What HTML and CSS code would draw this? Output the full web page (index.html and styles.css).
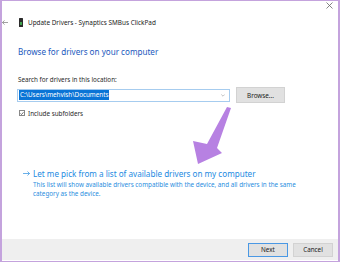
FILE: index.html
```html
<!DOCTYPE html>
<html>
<head>
<meta name="viewport" content="width=device-width, initial-scale=1">
<link rel="stylesheet" href="styles.css">
</head>
<body>
<div class="window">
  <div class="caption">
    <svg class="close" width="7" height="7" viewBox="0 0 7 7"><path d="M0.5 0.5L6.5 6.5M6.5 0.5L0.5 6.5" stroke="#666" stroke-width="0.8" fill="none"/></svg>
  </div>
  <div class="header">
    <svg class="back" width="6" height="5" viewBox="0 0 6 5"><path d="M2.5 0.4L0.5 2.5L2.5 4.6M0.5 2.5H6" stroke="#777" stroke-width="0.7" fill="none"/></svg>
    <svg class="device" width="4" height="9" viewBox="0 0 4 9"><rect x="0" y="0" width="4" height="9" rx="0.5" fill="#2b2b2b"/><rect x="1" y="4" width="2" height="3" fill="#3fa34d"/></svg>
    <span class="title">Update Drivers - Synaptics SMBus ClickPad</span>
  </div>
  <div class="content">
    <h1>Browse for drivers on your computer</h1>
    <div class="label">Search for drivers in this location:</div>
    <div class="path-row">
      <div class="combo">
        <span class="sel">C:\Users\mehvish\Documents</span>
        <svg width="4" height="3" viewBox="0 0 4 3"><path d="M0.3 0.5L2 2.2L3.7 0.5" stroke="#999" stroke-width="0.6" fill="none"/></svg>
      </div>
      <button class="btn browse">Browse...</button>
    </div>
    <div class="check">
      <span class="box"><svg width="5" height="5" viewBox="0 0 5 5"><path d="M0.6 2.5L1.9 3.8L4.4 0.9" stroke="#222" stroke-width="0.8" fill="none"/></svg></span>
      Include subfolders
    </div>
    <div class="pick">
      <svg class="pick-arrow" width="7" height="5" viewBox="0 0 7 5"><path d="M4.5 0.5L6.5 2.5L4.5 4.5M0 2.5H6.5" stroke="#2a8ee0" stroke-width="0.7" fill="none"/></svg>
      <div>
        <div class="pick-title">Let me pick from a list of available drivers on my computer</div>
        <div class="pick-desc">This list will show available drivers compatible with the device, and all drivers in the same category as the device.</div>
      </div>
    </div>
  </div>
  <div class="footer">
    <button class="btn next">Next</button>
    <button class="btn">Cancel</button>
  </div>
  <svg class="annot" width="44" height="66" viewBox="0 0 44 66"><path d="M37 7L41 8L27 48L32 53L8 64L3 41L17 44Z" fill="#b781e2"/></svg>
</div>
</body>
</html>
```

FILE: styles.css
```css
* {box-sizing: border-box;}

body {
  margin: 0;
  font-family: "Noto Sans", "Open Sans", sans-serif;
  background: #fff;
}

.window {
  position: relative;
  width: 340px;
  height: 262px;
  border: 1px solid #c4a3dd;
  border-left: 2px solid #c4a3dd;
  border-right: 2px solid #c4a3dd;
  display: flex;
  flex-direction: column;
  background: #fff;
}

.caption {
  height: 11px;
  display: flex;
  justify-content: flex-end;
  padding: 1px 5px 0 0;
}

.header {
  height: 20px;
  display: flex;
  align-items: center;
}

.back {margin-right: 11px;}
.device {margin-right: 5px;}

.title {
  font-size: 6.4px;
  color: #222;
}

.content {
  padding-left: 15px;
}

h1 {
  margin: 14px 0 0 0;
  padding-left: 1px;
  font-size: 8.1px;
  font-weight: normal;
  color: #2259bd;
  line-height: 11px;
}

.label {
  margin-top: 18px;
  padding-left: 1px;
  font-size: 6.3px;
  color: #2a2a2a;
  line-height: 9px;
}

.path-row {
  display: flex;
  align-items: center;
  margin-top: 3px;
  height: 16px;
}

.combo {
  width: 213px;
  height: 13px;
  border: 1px solid #a6ccef;
  display: flex;
  align-items: center;
  justify-content: space-between;
  padding: 0 4px 0 1px;
}

.sel {
  background: #0a74d6;
  color: #fff;
  font-size: 6.3px;
  line-height: 10px;
  padding: 0 1px;
}

.btn {
  font-family: inherit;
  font-size: 6.3px;
  color: #1a1a1a;
  background: #e1e1e1;
  border: 1px solid #d2d2d2;
  padding: 0;
}

.browse {
  width: 49px;
  height: 16px;
  margin-left: 6px;
}

.check {
  display: flex;
  align-items: center;
  height: 10px;
  margin-top: 5px;
  font-size: 6.3px;
  color: #2a2a2a;
}

.box {
  width: 6px;
  height: 6px;
  border: 1px solid #888;
  margin: 0 3px 0 2px;
  display: flex;
  align-items: center;
  justify-content: center;
}

.pick {
  display: flex;
  margin-top: 50px;
  padding-left: 6px;
}

.pick-arrow {
  margin: 3px 3px 0 0;
}

.pick-title {
  font-size: 8.1px;
  color: #1c8ae2;
  line-height: 11px;
}

.pick-desc {
  font-size: 6.3px;
  color: #2a8ee0;
  line-height: 9px;
  margin-top: 1px;
  width: 268px;
}

.footer {
  margin-top: auto;
  height: 21px;
  background: #efefef;
  display: flex;
  justify-content: flex-end;
  align-items: center;
  gap: 5px;
  padding-right: 5px;
  margin-bottom: 1px;
}

.footer .btn {
  width: 40px;
  height: 14px;
}

.next {
  border-color: #4a98e4;
}

.annot {
  position: absolute;
  left: 188px;
  top: 99px;
}
```
